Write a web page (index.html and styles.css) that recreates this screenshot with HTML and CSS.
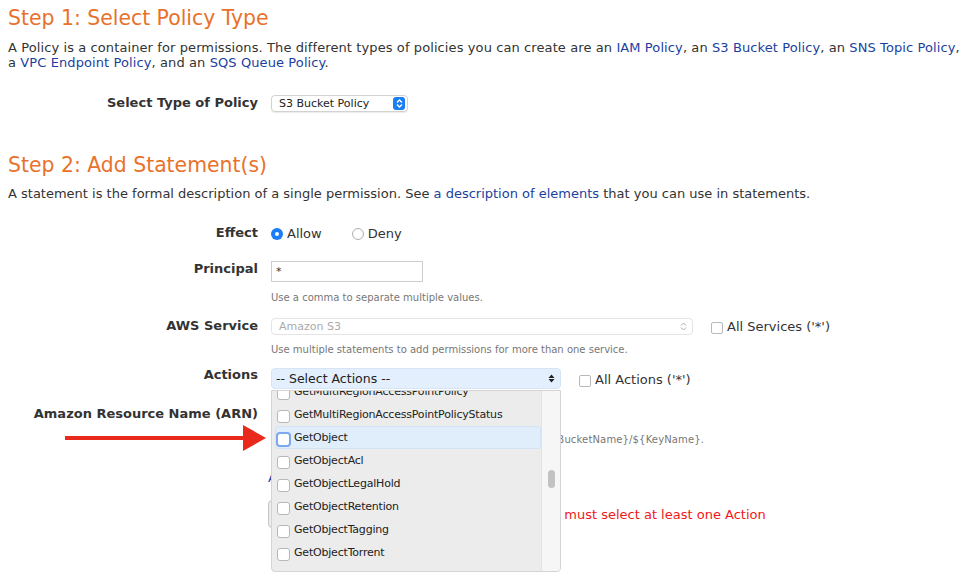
FILE: index.html
```html
<!DOCTYPE html>
<html>
<head>
<meta charset="utf-8">
<link rel="stylesheet" href="styles.css">
</head>
<body>
<div class="page">
  <h2 class="step-title">Step 1: Select Policy Type</h2>
  <p class="intro">A Policy is a container for permissions. The different types of policies you can create are an <a href="#">IAM Policy</a>, an <a href="#">S3 Bucket Policy</a>, an <a href="#">SNS Topic Policy</a>, a <a href="#">VPC Endpoint Policy</a>, and an <a href="#">SQS Queue Policy</a>.</p>

  <div class="row row-type">
    <div class="lbl">Select Type of Policy</div>
    <div class="ctl">
      <div class="sel sel-type">
        <span>S3 Bucket Policy</span>
        <span class="sel-btn"><svg width="7" height="9" viewBox="0 0 7 9"><path d="M1 3.5 L3.5 1 L6 3.5 M1 5.5 L3.5 8 L6 5.5" fill="none" stroke="#fff" stroke-width="1.3"/></svg></span>
      </div>
    </div>
  </div>

  <h2 class="step-title step2">Step 2: Add Statement(s)</h2>
  <p class="intro intro2">A statement is the formal description of a single permission. See <a href="#">a description of elements</a> that you can use in statements.</p>

  <div class="row row-effect">
    <div class="lbl">Effect</div>
    <div class="ctl radios">
      <span class="radio on"></span><span class="rtxt">Allow</span>
      <span class="radio off"></span><span class="rtxt">Deny</span>
    </div>
  </div>

  <div class="row row-principal">
    <div class="lbl">Principal</div>
    <div class="ctl"><div class="input">*</div></div>
  </div>
  <div class="help help1">Use a comma to separate multiple values.</div>

  <div class="row row-service">
    <div class="lbl">AWS Service</div>
    <div class="ctl ctl-inline">
      <div class="sel sel-service">
        <span>Amazon S3</span>
        <svg width="7" height="9" viewBox="0 0 7 9"><path d="M1 3.5 L3.5 1 L6 3.5 M1 5.5 L3.5 8 L6 5.5" fill="none" stroke="#aaa" stroke-width="1"/></svg>
      </div>
      <span class="cb cb-all"></span><span class="all-txt">All Services ('*')</span>
    </div>
  </div>
  <div class="help help2">Use multiple statements to add permissions for more than one service.</div>

  <div class="row row-actions">
    <div class="lbl">Actions</div>
    <div class="ctl ctl-inline">
      <div class="actions-wrap">
        <div class="sel sel-actions">
          <span>-- Select Actions --</span>
          <svg width="7" height="9" viewBox="0 0 7 9"><path d="M0.5 4 L3.5 0.5 L6.5 4 Z M0.5 5 L3.5 8.5 L6.5 5 Z" fill="#222"/></svg>
        </div>
        <div class="dropdown">
          <ul class="opts">
            <li><span class="cb"></span>GetMultiRegionAccessPointPolicy</li>
            <li><span class="cb"></span>GetMultiRegionAccessPointPolicyStatus</li>
            <li class="hl"><span class="cb focus"></span>GetObject</li>
            <li><span class="cb"></span>GetObjectAcl</li>
            <li><span class="cb"></span>GetObjectLegalHold</li>
            <li><span class="cb"></span>GetObjectRetention</li>
            <li><span class="cb"></span>GetObjectTagging</li>
            <li><span class="cb"></span>GetObjectTorrent</li>
          </ul>
          <div class="track"><div class="thumb"></div></div>
        </div>
      </div>
      <span class="cb cb-all cb-actions"></span><span class="all-txt">All Actions ('*')</span>
    </div>
  </div>

  <div class="row row-arn">
    <div class="lbl">Amazon Resource Name (ARN)</div>
    <div class="ctl"><div class="input input-arn"></div></div>
  </div>
  <div class="help help3">ARN should follow the following format: arn:aws:s3:::${BucketName}/${KeyName}.</div>

  <div class="cond"><a href="#">Add Conditions (Optional)</a></div>

  <div class="btn-row">
    <div class="btn">Add Statement</div>
    <span class="err">You must select at least one Action</span>
  </div>
</div>

<svg class="arrow" width="210" height="30" viewBox="0 0 210 30">
  <rect x="0" y="11" width="182" height="4" fill="#e8291c"/>
  <polygon points="178,0 201,13 178,26" fill="#e8291c"/>
</svg>
</body>
</html>
```

FILE: styles.css
```css
html, body {
  margin: 0;
  padding: 0;
  background: #fff;
}
body {
  font-family: "DejaVu Sans", Verdana, sans-serif;
  color: #333;
  font-size: 13px;
  min-height: 580px;
}
a {
  color: #1b3fa0;
  text-decoration: none;
}
.page {
  position: relative;
  padding: 0 8px;
  min-height: 580px;
  box-sizing: border-box;
}
.step-title {
  margin: 6px 0 0;
  font-weight: normal;
  font-size: 20.4px;
  line-height: 24px;
  color: #e8722c;
}
.step2 {
  margin-top: 41px;
}
.intro {
  margin: 10px 0 0;
  line-height: 15px;
  font-size: 13px;
  letter-spacing: 0.1px;
}
.intro2 {
  margin-top: 9px;
  letter-spacing: 0;
}
.row {
  display: flex;
  align-items: center;
}
.lbl {
  width: 250px;
  padding-right: 13px;
  text-align: right;
  font-weight: bold;
  font-size: 13px;
  color: #333;
  line-height: 16px;
  flex: none;
}
.ctl {
  flex: none;
}
.ctl-inline {
  display: flex;
  align-items: center;
}
.row-type {
  margin-top: 24px;
  height: 18px;
}
.sel {
  box-sizing: border-box;
  display: flex;
  align-items: center;
  justify-content: space-between;
  border-radius: 4px;
}
.sel-type {
  width: 137px;
  height: 17px;
  border: 1px solid #d2d2d2;
  box-shadow: 0 1px 1px rgba(0,0,0,0.08);
  padding: 0 2px 0 7px;
  font-size: 11px;
  color: #222;
  background: #fff;
}
.sel-btn {
  width: 12px;
  height: 13px;
  border-radius: 3px;
  background: #1b7ef6;
  display: flex;
  align-items: center;
  justify-content: center;
}
.row-effect {
  margin-top: 24px;
  height: 16px;
}
.radios {
  display: flex;
  align-items: center;
}
.radio {
  box-sizing: border-box;
  width: 12px;
  height: 12px;
  border-radius: 50%;
  flex: none;
}
.radio.on {
  background: #1b7ef6;
  position: relative;
  margin-top: 2px;
}
.radio.on::after {
  content: "";
  position: absolute;
  left: 4px;
  top: 4px;
  width: 4px;
  height: 4px;
  border-radius: 50%;
  background: #fff;
}
.radio.off {
  border: 1px solid #b0b0b0;
  margin-left: 30px;
  margin-top: 2px;
}
.rtxt {
  margin-left: 4px;
  font-size: 13px;
  color: #333;
}
.row-principal {
  margin-top: 20px;
  align-items: flex-start;
}
.input {
  box-sizing: border-box;
  width: 152px;
  height: 21px;
  border: 1px solid #cdcdcd;
  font-size: 11px;
  padding: 3px 0 0 4px;
  color: #333;
  background: #fff;
}
.help {
  padding-left: 263px;
  font-size: 10px;
  line-height: 14px;
  color: #777;
}
.help1 {
  margin-top: 9px;
}
.row-service {
  margin-top: 13px;
  height: 17px;
}
.row-service .lbl {
  margin-top: -2px;
}
.sel-service {
  width: 422px;
  height: 17px;
  border: 1px solid #e4e4e4;
  padding: 0 5px 0 7px;
  font-size: 11px;
  color: #aaa;
  background: #fff;
}
.cb {
  box-sizing: border-box;
  display: inline-block;
  width: 12px;
  height: 12px;
  border: 1px solid #b8b8b8;
  border-radius: 2px;
  background: #fff;
  flex: none;
}
.cb-all {
  margin-left: 18px;
  margin-top: 2px;
}
.all-txt {
  margin-left: 4px;
  font-size: 13px;
  color: #333;
}
.help2 {
  margin-top: 8px;
}
.row-actions {
  margin-top: 11px;
  height: 21px;
  align-items: flex-start;
}
.row-actions .lbl {
  margin-top: -1px;
}
.actions-wrap {
  position: relative;
}
.sel-actions {
  width: 290px;
  height: 21px;
  background: #e3effc;
  border: 1px solid #d6e5f5;
  padding: 0 5px 0 4px;
  font-size: 12.5px;
  color: #222;
}
.cb-actions {
  margin-left: 18px;
  margin-top: 5px;
}
.row-actions .all-txt {
  margin-top: 1px;
}
.dropdown {
  position: absolute;
  z-index: 5;
  left: 0;
  top: 22px;
  width: 290px;
  height: 182px;
  box-sizing: border-box;
  border: 1px solid #d4d4d4;
  border-radius: 0 0 4px 4px;
  background: #ececec;
  overflow: hidden;
  display: flex;
}
.opts {
  list-style: none;
  margin: -11px 0 0;
  padding: 0;
  width: 269px;
  flex: none;
}
.opts li {
  box-sizing: border-box;
  height: 23px;
  display: flex;
  align-items: center;
  margin-left: 3px;
  padding-left: 1px;
  font-size: 11px;
  letter-spacing: -0.2px;
  color: #222;
  border: 1px solid transparent;
  border-radius: 3px;
}
.opts li .cb {
  margin-right: 4px;
  margin-top: 3px;
  width: 13px;
  height: 13px;
  border-radius: 3px;
}
.opts li.hl {
  background: #e0edfb;
  border-color: #d3e3f5;
}
.opts li .cb.focus {
  border: 2px solid #7ba8ee;
  width: 15px;
  height: 15px;
  margin-left: -1px;
  margin-right: 3px;
  border-radius: 4px;
}
.track {
  flex: none;
  width: 18px;
  background: #f6f6f6;
  border-left: 1px solid #e2e2e2;
  position: relative;
}
.thumb {
  position: absolute;
  left: 6px;
  top: 79px;
  width: 7px;
  height: 18px;
  border-radius: 4px;
  background: #c2c2c2;
}
.row-arn {
  margin-top: 15px;
  height: 20px;
}
.input-arn {
  width: 280px;
  height: 20px;
}
.help3 {
  margin-top: 9px;
  letter-spacing: 0.15px;
}
.cond {
  margin-top: 23px;
  padding-left: 260px;
  font-size: 13px;
  line-height: 16px;
}
.btn-row {
  margin-top: 14px;
  padding-left: 260px;
  display: flex;
  align-items: center;
}
.btn {
  box-sizing: border-box;
  height: 28px;
  padding: 0 14px;
  border: 1px solid #c5c5c5;
  border-radius: 4px;
  background: #ececec;
  display: flex;
  align-items: center;
  font-size: 13px;
  color: #333;
}
.err {
  margin-left: 142px;
  color: #f01818;
  font-size: 13px;
}
.arrow {
  position: absolute;
  left: 65px;
  top: 425px;
}
```
